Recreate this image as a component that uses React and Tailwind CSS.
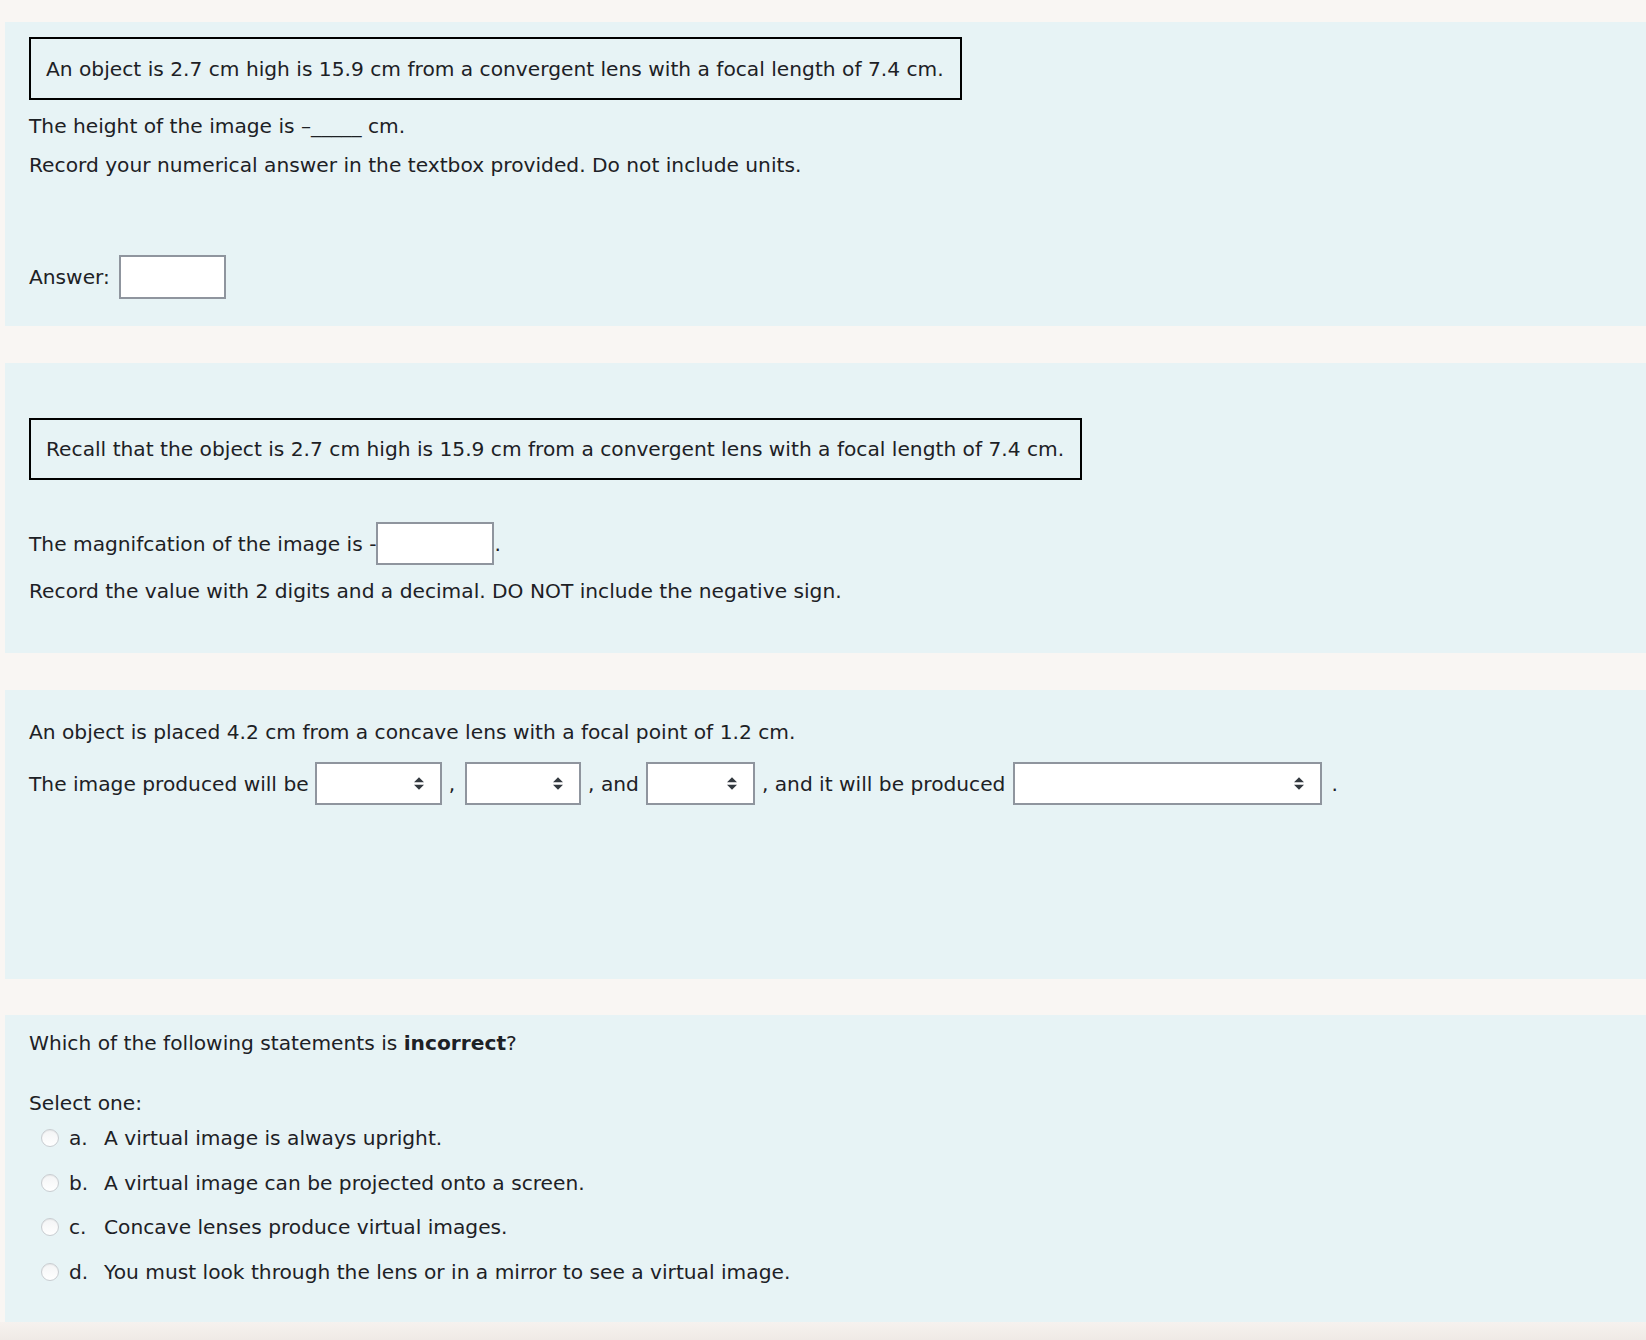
import React from "react";

const Arrow = () => (
  <svg width="10" height="13" viewBox="0 0 4 5" className="block">
    <path fill="#343a40" d="M2 0L0 2h4zm0 5L0 3h4z" />
  </svg>
);

const Select = ({ w }) => (
  <span
    className="inline-flex items-center justify-end align-middle h-[43px] bg-white border-2 border-[#8f959e] pr-[16px] box-border"
    style={{ width: w }}
  >
    <Arrow />
  </span>
);

const Radio = () => (
  <span className="inline-block w-[18px] h-[18px] rounded-full border border-[#c9cdd1] bg-gradient-to-b from-[#f3f4f5] to-white shadow-[inset_0_1px_1px_rgba(0,0,0,0.06)] box-border" />
);

const Option = ({ letter, text, mt }) => (
  <div className={`flex items-center h-[28px] ${mt}`}>
    <span className="ml-[12px] mr-[10px] flex items-center">
      <Radio />
    </span>
    <span className="w-[35px]">{letter}</span>
    <span>{text}</span>
  </div>
);

export default function App() {
  return (
    <div
      className="min-h-[1340px] w-[1646px] bg-[#f9f6f3] text-[#1d2125] text-[20.2px] leading-[28px] flex flex-col"
      style={{ fontFamily: "'DejaVu Sans', Verdana, sans-serif" }}
    >
      <div className="pl-[5px] pt-[22px]">
        {/* Panel 1 */}
        <div className="bg-[#e7f3f5] pl-[24px] pt-[15px] pb-[27px]">
          <div className="w-[933px] border-2 border-black px-[15px] py-[15.5px] box-border">
            An object is 2.7 cm high is 15.9 cm from a convergent lens with a focal length of 7.4 cm.
          </div>
          <p className="mt-[12px]">The height of the image is –_____ cm.</p>
          <p className="mt-[11px]">Record your numerical answer in the textbox provided. Do not include units.</p>
          <div className="mt-[76px] flex items-center h-[44px]">
            <span>Answer:</span>
            <span className="ml-[9px] w-[107px] h-[44px] bg-white border-2 border-[#8f959e] box-border" />
          </div>
        </div>

        {/* Panel 2 */}
        <div className="mt-[37px] bg-[#e7f3f5] pl-[24px] pt-[55px] pb-[48px]">
          <div className="w-[1053px] border-2 border-black px-[15px] py-[15px] box-border">
            Recall that the object is 2.7 cm high is 15.9 cm from a convergent lens with a focal length of 7.4 cm.
          </div>
          <div className="mt-[42px] flex items-center h-[43px]">
            <span>The magnifcation of the image is -</span>
            <span className="w-[118px] h-[43px] bg-white border-2 border-[#8f959e] box-border" />
            <span>.</span>
          </div>
          <p className="mt-[12px]">Record the value with 2 digits and a decimal. DO NOT include the negative sign.</p>
        </div>

        {/* Panel 3 */}
        <div className="mt-[37px] bg-[#e7f3f5] pl-[24px] pt-[28px] pb-[174px]">
          <p>An object is placed 4.2 cm from a concave lens with a focal point of 1.2 cm.</p>
          <div className="mt-[16px] flex items-center h-[43px] whitespace-pre">
            <span>The image produced will be</span>
            <span className="ml-[6px]"><Select w={127} /></span>
            <span className="ml-[7px]">,</span>
            <span className="ml-[10px]"><Select w={116} /></span>
            <span className="ml-[7px]">, and</span>
            <span className="ml-[7px]"><Select w={109} /></span>
            <span className="ml-[7px]">, and it will be produced</span>
            <span className="ml-[8px]"><Select w={309} /></span>
            <span className="ml-[9px]">.</span>
          </div>
        </div>

        {/* Panel 4 */}
        <div className="mt-[36px] bg-[#e7f3f5] pl-[24px] pt-[14px] pb-[36px]">
          <p>
            Which of the following statements is <strong className="font-bold">incorrect</strong>?
          </p>
          <p className="mt-[32px]">Select one:</p>
          <Option letter="a." text="A virtual image is always upright." mt="mt-[7px]" />
          <Option letter="b." text="A virtual image can be projected onto a screen." mt="mt-[17px]" />
          <Option letter="c." text="Concave lenses produce virtual images." mt="mt-[16px]" />
          <Option letter="d." text="You must look through the lens or in a mirror to see a virtual image." mt="mt-[17px]" />
        </div>
      </div>
      <div className="flex-1 bg-gradient-to-b from-[#f6f2ef] to-[#efeae6]" />
    </div>
  );
}
